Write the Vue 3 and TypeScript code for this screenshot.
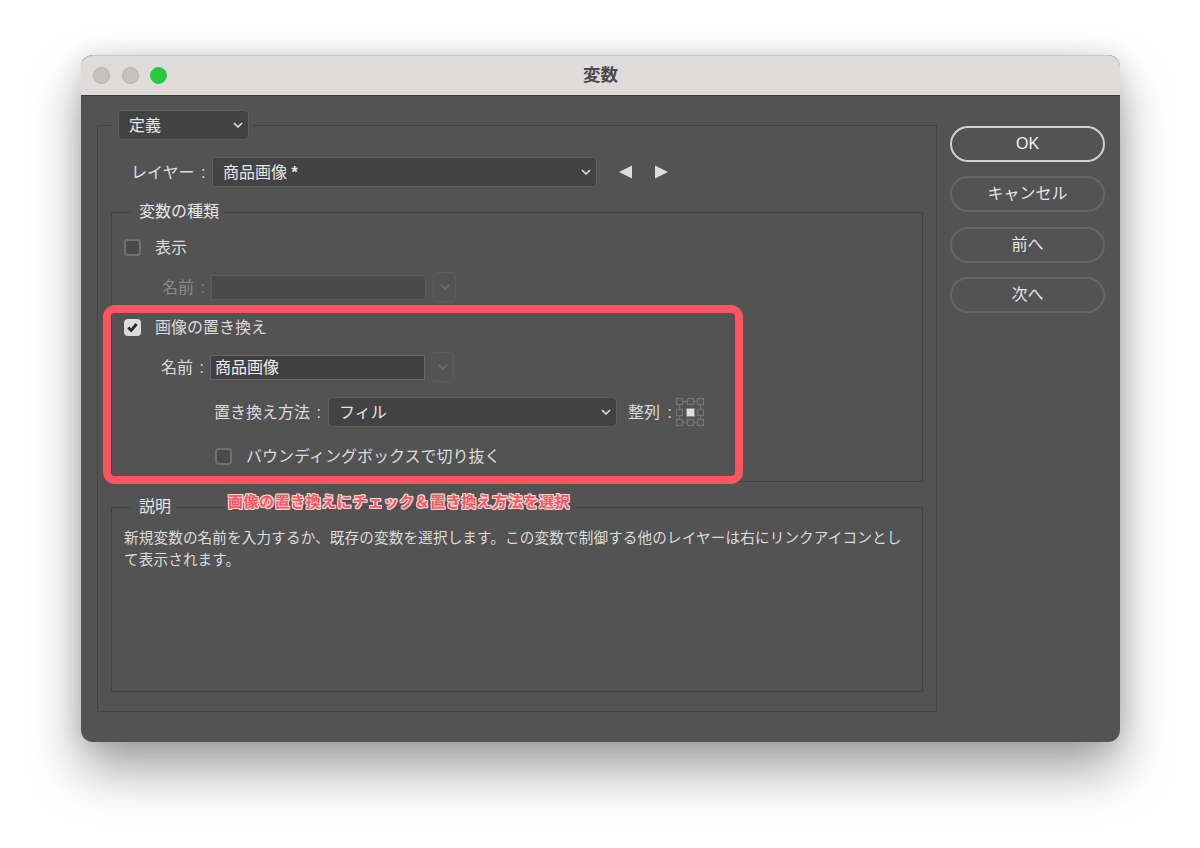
<template>
  <div class="page">
    <div class="window">
      <div class="titlebar">
        <div class="lights">
          <span class="light"></span>
          <span class="light"></span>
          <span class="light green"></span>
        </div>
        <div class="title">変数</div>
      </div>

      <div class="content">
        <fieldset class="outer">
          <legend class="outer-legend">
            <div class="select define">
              <span>定義</span>
              <svg class="chev" width="10" height="6" viewBox="0 0 10 6"><path d="M1 1l4 4 4-4" /></svg>
            </div>
          </legend>

          <div class="row layer-row">
            <span class="label layer-label">レイヤー :</span>
            <div class="select layer-select">
              <span>商品画像 <b class="star">*</b></span>
              <svg class="chev" width="10" height="6" viewBox="0 0 10 6"><path d="M1 1l4 4 4-4" /></svg>
            </div>
            <div class="arrows">
              <svg width="14" height="14" viewBox="0 0 14 14"><path d="M0 7l13-6.500v13z" /></svg>
              <svg width="14" height="14" viewBox="0 0 14 14"><path d="M14 7l-13-6.500v13z" /></svg>
            </div>
          </div>

          <fieldset class="inner kinds">
            <legend class="inner-legend">変数の種類</legend>

            <div class="row check-row first">
              <span class="check"></span>
              <span class="label">表示</span>
            </div>

            <div class="row name-row disabled">
              <span class="label name-label">名前 :</span>
              <div class="field"></div>
              <div class="drop">
                <svg class="chev" width="10" height="6" viewBox="0 0 10 6"><path d="M1 1l4 4 4-4" /></svg>
              </div>
            </div>

            <div class="row check-row second">
              <span class="check on">
                <svg width="17" height="17" viewBox="0 0 17 17"><path d="M4.200 8.500l3 3 5.400-6.500" /></svg>
              </span>
              <span class="label">画像の置き換え</span>
            </div>

            <div class="row name-row active">
              <span class="label name-label">名前 :</span>
              <div class="field">商品画像</div>
              <div class="drop">
                <svg class="chev" width="10" height="6" viewBox="0 0 10 6"><path d="M1 1l4 4 4-4" /></svg>
              </div>
            </div>

            <div class="row method-row">
              <span class="label method-label">置き換え方法 :</span>
              <div class="select method-select">
                <span>フィル</span>
                <svg class="chev" width="10" height="6" viewBox="0 0 10 6"><path d="M1 1l4 4 4-4" /></svg>
              </div>
              <span class="label align-label">整列 :</span>
              <svg class="align-grid" width="28" height="28" viewBox="0 0 28 28">
                <rect v-for="c in gridCells" :key="c.id" :x="c.x" :y="c.y" width="6" height="6" />
                <line v-for="l in gridLines" :key="l.id" :x1="l.x1" :y1="l.y1" :x2="l.x2" :y2="l.y2" />
                <rect class="selected" x="10.500" y="10.500" width="8" height="8" />
              </svg>
            </div>

            <div class="row check-row crop">
              <span class="check"></span>
              <span class="label">バウンディングボックスで切り抜く</span>
            </div>
          </fieldset>

          <fieldset class="inner info">
            <legend class="inner-legend">説明</legend>
            <p class="desc">新規変数の名前を入力するか、既存の変数を選択します。この変数で制御する他のレイヤーは右にリンクアイコンとして表示されます。</p>
          </fieldset>
        </fieldset>

        <div class="buttons">
          <button v-for="b in buttons" :key="b" class="btn" :class="{ primary: b === 'OK' }">{{ b }}</button>
        </div>
      </div>

      <!-- annotation over the dialog -->
      <div class="highlight"></div>
      <div class="note">画像の置き換えにチェック＆置き換え方法を選択</div>
    </div>
  </div>
</template>

<script setup lang="ts">
const buttons: string[] = ['OK', 'キャンセル', '前へ', '次へ'];

const stops = [0.5, 11.5, 21.5];

const gridCells = stops
  .flatMap((y) => stops.map((x) => ({ id: `${x}-${y}`, x, y })))
  .filter((c) => !(c.x === 11.5 && c.y === 11.5));

// only the outer ring is joined up, the selected middle cell stands alone
const gridLines = [stops[0], stops[2]].flatMap((p, i) => [
  { id: `h1-${i}`, x1: 6.5, y1: p + 3, x2: 11.5, y2: p + 3 },
  { id: `h2-${i}`, x1: 17.5, y1: p + 3, x2: 21.5, y2: p + 3 },
  { id: `v1-${i}`, x1: p + 3, y1: 6.5, x2: p + 3, y2: 11.5 },
  { id: `v2-${i}`, x1: p + 3, y1: 17.5, x2: p + 3, y2: 21.5 },
]);
</script>

<style>
html,
body {
  margin: 0;
  background: #ffffff;
}
</style>

<style scoped>
.page {
  width: 1200px;
  height: 848px;
  padding: 55px 0 0 81px;
  box-sizing: border-box;
  overflow: hidden;
  font-family: "Liberation Sans", "Noto Sans CJK JP", sans-serif;
  color: #e0e0e0;
}

.window {
  position: relative;
  width: 1039px;
  height: 687px;
  border-radius: 12px;
  overflow: visible;
  background: #535353;
  box-shadow: 0 28px 52px rgba(0, 0, 0, 0.36), 0 0 24px rgba(0, 0, 0, 0.12);
}

.titlebar {
  position: relative;
  height: 41px;
  box-sizing: border-box;
  display: flex;
  align-items: center;
  justify-content: center;
  padding-bottom: 4px;
  background: #dfdbda;
  border-top: 1px solid #cbc7c6;
  border-bottom: 1px solid #3a3a3a;
  border-radius: 12px 12px 0 0;
}

.lights {
  position: absolute;
  left: 12px;
  top: 11px;
  display: flex;
  gap: 11.500px;
}

.light {
  width: 17px;
  height: 17px;
  box-sizing: border-box;
  border-radius: 50%;
  background: #c5c1c0;
  border: 1px solid #b6b2b1;
}

.light.green {
  background: #28c840;
  border-color: #28c840;
}

.title {
  font-size: 17.500px;
  font-weight: 700;
  color: #4a4a4a;
}

.content {
  display: flex;
  align-items: flex-start;
  padding: 14px 15px 0 16px;
  gap: 13px;
}

fieldset {
  margin: 0;
  min-width: 0;
  box-sizing: border-box;
  border: 1px solid #434343;
}

.outer {
  width: 840px;
  height: 602px;
  padding: 0 13px;
}

.outer-legend {
  margin-left: 1px;
  padding: 0 4px 0 6px;
}

.select {
  display: flex;
  align-items: center;
  justify-content: space-between;
  box-sizing: border-box;
  padding: 0 5px 2px 10px;
  background: #434343;
  border: 1px solid #5e5e5e;
  border-radius: 4px;
  font-size: 16px;
  color: #e6e6e6;
}

.select .chev {
  margin-top: 2px;
}

.define {
  width: 131px;
  height: 30px;
}

.chev {
  fill: none;
  stroke: #e6e6e6;
  stroke-width: 1.500;
}

.row {
  display: flex;
  align-items: center;
}

.label {
  padding-top: 2px;
  font-size: 16px;
  line-height: 20px;
  word-spacing: 2px;
  white-space: nowrap;
  color: #dcdcdc;
}

.layer-row {
  margin-top: 17px;
  height: 30px;
  padding-left: 20px;
}

.layer-label {
  width: 81px;
}

.layer-select {
  width: 385px;
  height: 30px;
}

.star {
  font-weight: 700;
}

.arrows {
  display: flex;
  gap: 21px;
  margin-left: 22px;
  margin-top: -1px;
}

.arrows path {
  fill: #dcdcdc;
}

.inner {
  width: 812px;
  padding: 0 12px;
}

.inner-legend {
  margin-left: 7px;
  padding: 0 6px 0 8px;
  font-size: 16px;
  line-height: 20px;
  color: #e6e6e6;
}

.kinds {
  height: 280px;
  margin-top: 15px;
}

.check-row .label {
  margin-left: 14px;
}

.check {
  flex: none;
  width: 17px;
  height: 17px;
  box-sizing: border-box;
  border: 2px solid #707070;
  border-radius: 4px;
  background: #4a4a4a;
}

.check.on {
  border: none;
  background: #dcdcdc;
}

.check.on svg {
  display: block;
}

.check.on path {
  fill: none;
  stroke: #2b2b2b;
  stroke-width: 2.800;
}

.first {
  margin-top: 15px;
  height: 20px;
}

.name-row {
  height: 30px;
}

.name-label {
  width: 48px;
  text-align: right;
}

.field {
  width: 215px;
  height: 25px;
  box-sizing: border-box;
  margin-left: 6px;
  padding-left: 4px;
  font-size: 16px;
  line-height: 23px;
  color: #eeeeee;
}

.drop {
  width: 23px;
  height: 30px;
  box-sizing: border-box;
  margin-left: 7px;
  display: flex;
  align-items: center;
  justify-content: center;
  border: 1px solid #5c5c5c;
  border-radius: 4px;
}

.drop .chev {
  stroke: #6f6f6f;
}

.disabled {
  margin-top: 15px;
  padding-left: 33px;
}

.disabled .label {
  color: #8b8b8b;
}

.disabled .field {
  background: #4a4a4a;
  border: 1px solid #5c5c5c;
}

.second {
  margin-top: 15px;
  height: 20px;
}

.active {
  margin-top: 15px;
  padding-left: 32px;
}

.active .drop {
  margin-left: 6px;
}

.active .field {
  background: #404040;
  border: 1px solid #666666;
}

.method-row {
  margin-top: 15px;
  height: 30px;
  padding-left: 90px;
}

.method-label {
  width: 108px;
}

.method-select {
  width: 289px;
  height: 30px;
  margin-left: 6px;
}

.align-label {
  margin-left: 11px;
  width: 48px;
  word-spacing: 3px;
}

.align-grid rect,
.align-grid line {
  fill: none;
  stroke: #747474;
  stroke-width: 1.300;
}

.align-grid .selected {
  fill: #e0e0e0;
  stroke: #8c8c8c;
  stroke-width: 1;
}

.crop {
  margin-top: 19px;
  height: 20px;
  padding-left: 91px;
}

.info {
  height: 195px;
  margin-top: 15px;
}

.desc {
  margin: 10px 0 0;
  max-width: 780px;
  font-size: 14.600px;
  line-height: 22px;
  letter-spacing: 0.130px;
  color: #dcdcdc;
}

.buttons {
  display: flex;
  flex-direction: column;
  gap: 14.400px;
  padding-top: 16px;
}

.btn {
  width: 155px;
  height: 36px;
  box-sizing: border-box;
  padding: 0 0 4px;
  background: transparent;
  border: 2px solid #666666;
  border-radius: 18px;
  font: inherit;
  font-size: 16px;
  color: #e6e6e6;
}

.btn.primary {
  padding: 0;
  border: 2px solid #d0d0d0;
  color: #f2f2f2;
}

.highlight {
  position: absolute;
  left: 22px;
  top: 250px;
  width: 640px;
  height: 179px;
  box-sizing: border-box;
  border: 8px solid #fc5560;
  border-radius: 12px;
}

.note {
  position: absolute;
  left: 147px;
  top: 435px;
  font-size: 15px;
  line-height: 24px;
  letter-spacing: 0.550px;
  font-weight: 700;
  white-space: nowrap;
  color: #fc5560;
  text-shadow: 1px 0 0 #f3d6d6, -1px 0 0 #f3d6d6, 0 1px 0 #f3d6d6, 0 -1px 0 #f3d6d6, 1px 1px 0 #f3d6d6, -1px -1px 0 #f3d6d6, 1px -1px 0 #f3d6d6, -1px 1px 0 #f3d6d6;
}
</style>
